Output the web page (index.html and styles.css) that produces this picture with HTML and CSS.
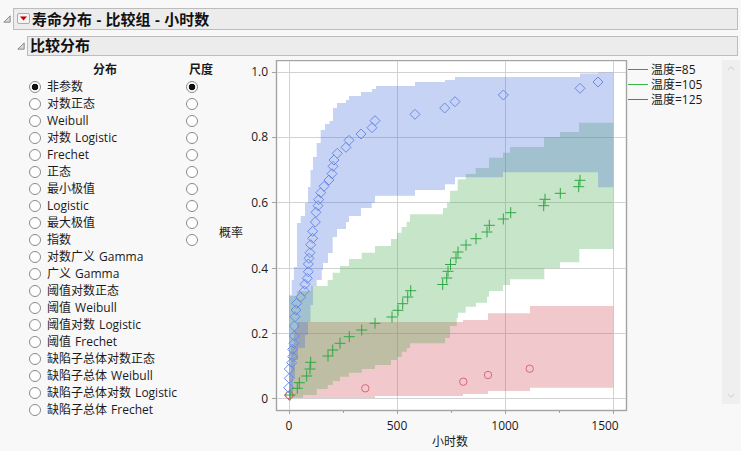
FILE: index.html
```html
<!DOCTYPE html>
<html lang="zh">
<head>
    <meta charset="UTF-8">
    <title>寿命分布 - 比较组 - 小时数</title>
    <link rel="stylesheet" href="styles.css">
</head>
<body>
    <div class="outline-row top-row">
        <svg class="disclosure" viewBox="0 0 10 10"><path d="M9 1V9H1Z"/></svg>
        <div class="outline-bar main-bar">
            <span class="menu-button"><svg viewBox="0 0 11 9"><path d="M2 2.5H9L5.5 6.5Z"/></svg></span>
            <span>寿命分布 - 比较组 - 小时数</span>
        </div>
    </div>
    <div class="outline-row sub-row">
        <svg class="disclosure" viewBox="0 0 10 10"><path d="M9 1V9H1Z"/></svg>
        <div class="outline-bar sub-bar">比较分布</div>
    </div>

    <div class="content">
        <div class="options">
            <div class="dist-col">
                <div class="col-head">分布</div>
                <label class="opt"><i class="radio on"></i>非参数</label>
                <label class="opt"><i class="radio"></i>对数正态</label>
                <label class="opt"><i class="radio"></i>Weibull</label>
                <label class="opt"><i class="radio"></i>对数 Logistic</label>
                <label class="opt"><i class="radio"></i>Frechet</label>
                <label class="opt"><i class="radio"></i>正态</label>
                <label class="opt"><i class="radio"></i>最小极值</label>
                <label class="opt"><i class="radio"></i>Logistic</label>
                <label class="opt"><i class="radio"></i>最大极值</label>
                <label class="opt"><i class="radio"></i>指数</label>
                <label class="opt"><i class="radio"></i>对数广义 Gamma</label>
                <label class="opt"><i class="radio"></i>广义 Gamma</label>
                <label class="opt"><i class="radio"></i>阈值对数正态</label>
                <label class="opt"><i class="radio"></i>阈值 Weibull</label>
                <label class="opt"><i class="radio"></i>阈值对数 Logistic</label>
                <label class="opt"><i class="radio"></i>阈值 Frechet</label>
                <label class="opt"><i class="radio"></i>缺陷子总体对数正态</label>
                <label class="opt"><i class="radio"></i>缺陷子总体 Weibull</label>
                <label class="opt"><i class="radio"></i>缺陷子总体对数 Logistic</label>
                <label class="opt"><i class="radio"></i>缺陷子总体 Frechet</label>
            </div>
            <div class="scale-col">
                <div class="col-head">尺度</div>
                <div class="opt"><i class="radio on"></i></div>
                <div class="opt"><i class="radio"></i></div>
                <div class="opt"><i class="radio"></i></div>
                <div class="opt"><i class="radio"></i></div>
                <div class="opt"><i class="radio"></i></div>
                <div class="opt"><i class="radio"></i></div>
                <div class="opt"><i class="radio"></i></div>
                <div class="opt"><i class="radio"></i></div>
                <div class="opt"><i class="radio"></i></div>
                <div class="opt"><i class="radio"></i></div>
            </div>
        </div>

        <!-- viewBox uses page coordinates so points read straight off the screenshot -->
        <svg class="plot" viewBox="216 60 412 391">
            <defs>
                <path id="dia" d="M0 -5L5 0L0 5L-5 0Z"/>
                <path id="plus" d="M-5.5 0H5.5M0 -5.5V5.5"/>
            </defs>
            <rect class="frame" x="276.5" y="60.5" width="350" height="350"/>
            <g class="grid">
                <path d="M289.5 61V410M397.5 61V410M505.5 61V410M613.5 61V410"/>
                <path d="M277 72.5H626M277 137.5H626M277 202.5H626M277 268.5H626M277 333.5H626M277 398.5H626"/>
            </g>

            <path class="band band-red" d="M289.3 398V372H291V345H294V330H297V322H463V320H488V313.3H530V306H613.3V387.7H530V391H488V394H463V396H375V398Z"/>
            <path class="band band-green" d="M289.3 398V296H297V291H311V286H327.7V280H332.7V272.7H340V266H349V259H361.7V252.7H375V246H391V239H397V232.7H401.7V227H406.7V221.7H410V214.3H443V208H447V202.7H450V190.7H457.7V179.3H465.7V174H475.7V168H489V157.7H503V152.7H510V147H544V137.3H560V132H579V122.7H613.3V249H579.3V262.3H560V268.3H544.3V279.3H510V285H503V291H489V296.7H487V302.7H476V306.7H465.7V312.7H458V318H456.7V326H450V338H445V343.3H410V348H406.7V351.7H401.7V357H397V360H391V365H375V369H361.7V372.7H349V376.7H340V381H332.7V385H327.7V389H316.7V395H303V397.7H293V398Z"/>
            <path class="band band-blue" d="M289.3 398V295H291.7V280H294V267H297V223H300.7V216H305V203H308V187H310.5V170H313V157H316.7V143H320.7V130H325V124H329.5V121H333V108H337V103H346V100H349V96H361V92H372V89H376V86H415V82H445V80H455V77H580V73.5H598V72.5H613.3V187.3H598V172.3H503V177.3H455V184.3H445V190H415V195.7H375V202.7H371.7V208H361V216H349V222H346V229H337V237H332.7V253H328V263H323V270H321.7V280H316.7V286H313V305H310.5V322H308V335H305V348H298V360H295V378H293V395H290V398Z"/>

            <g class="ticks">
                <path d="M289.5 410V414M343.5 410V413M397.5 410V414M451.5 410V413M505.5 410V414M559.5 410V413M613.5 410V414"/>
                <path d="M272 72.5H276M272 137.5H276M272 202.5H276M272 268.5H276M272 333.5H276M272 398.5H276"/>
            </g>
            <g class="axis-text y-nums">
                <text x="268" y="75.5">1.0</text>
                <text x="268" y="141">0.8</text>
                <text x="268" y="206.5">0.6</text>
                <text x="268" y="272.5">0.4</text>
                <text x="268" y="337.5">0.2</text>
                <text x="268" y="402.5">0</text>
            </g>
            <g class="axis-text x-nums">
                <text x="289" y="430">0</text>
                <text x="397" y="430">500</text>
                <text x="505" y="430">1000</text>
                <text x="605" y="430">1500</text>
            </g>
            <text class="axis-text x-nums" x="450" y="446">小时数</text>
            <text class="axis-text x-nums" x="231" y="237">概率</text>

            <g class="pts-blue">
                <use href="#dia" x="598" y="82"/><use href="#dia" x="580" y="88.3"/><use href="#dia" x="503.3" y="95"/>
                <use href="#dia" x="455" y="101.7"/><use href="#dia" x="444.7" y="108"/><use href="#dia" x="415" y="114.3"/>
                <use href="#dia" x="375" y="120.7"/><use href="#dia" x="372" y="127.7"/><use href="#dia" x="361" y="134"/>
                <use href="#dia" x="349" y="140.3"/><use href="#dia" x="346" y="147.3"/><use href="#dia" x="337.3" y="153.3"/>
                <use href="#dia" x="334" y="160"/><use href="#dia" x="333" y="166.3"/><use href="#dia" x="332" y="173.7"/>
                <use href="#dia" x="329" y="180"/><use href="#dia" x="324" y="186.3"/><use href="#dia" x="320.7" y="192.7"/>
                <use href="#dia" x="318.7" y="199.7"/><use href="#dia" x="318" y="205.7"/><use href="#dia" x="316" y="212.3"/>
                <use href="#dia" x="315.3" y="222"/><use href="#dia" x="312.7" y="231.3"/><use href="#dia" x="312.7" y="238.3"/>
                <use href="#dia" x="310.7" y="244.7"/><use href="#dia" x="310" y="252.7"/><use href="#dia" x="309" y="258.3"/>
                <use href="#dia" x="308.3" y="264"/><use href="#dia" x="308.3" y="271.7"/><use href="#dia" x="307.3" y="278.3"/>
                <use href="#dia" x="305" y="284.3"/><use href="#dia" x="304.3" y="291"/><use href="#dia" x="300.7" y="297"/>
                <use href="#dia" x="296.7" y="303.3"/><use href="#dia" x="296" y="310"/><use href="#dia" x="295" y="316.7"/>
                <use href="#dia" x="294.3" y="326"/><use href="#dia" x="294.3" y="336"/><use href="#dia" x="294" y="343.3"/>
                <use href="#dia" x="292.7" y="349.3"/><use href="#dia" x="292.7" y="356.7"/><use href="#dia" x="291.7" y="362.7"/>
                <use href="#dia" x="289.3" y="369"/><use href="#dia" x="289.3" y="378.3"/><use href="#dia" x="288.7" y="387.7"/>
                <use href="#dia" x="289.3" y="395.3"/>
            </g>
            <g class="pts-red">
                <circle cx="289.3" cy="395" r="3.7"/><circle cx="365.3" cy="388.3" r="3.7"/><circle cx="463.3" cy="381.7" r="3.7"/>
                <circle cx="488" cy="375" r="3.7"/><circle cx="529.7" cy="368.7" r="3.7"/>
            </g>
            <g class="pts-green">
                <use href="#plus" x="290" y="395"/><use href="#plus" x="297.3" y="388.3"/><use href="#plus" x="299.3" y="382.7"/>
                <use href="#plus" x="306.7" y="376"/><use href="#plus" x="310" y="369"/><use href="#plus" x="310.7" y="362.3"/>
                <use href="#plus" x="328" y="356"/><use href="#plus" x="332.7" y="350"/><use href="#plus" x="340" y="343.3"/>
                <use href="#plus" x="349.3" y="336.7"/><use href="#plus" x="361.7" y="330"/><use href="#plus" x="375" y="323.3"/>
                <use href="#plus" x="392" y="317"/><use href="#plus" x="398" y="310.3"/><use href="#plus" x="402.7" y="303.7"/>
                <use href="#plus" x="407.7" y="297"/><use href="#plus" x="410.7" y="290.7"/><use href="#plus" x="442.7" y="284.5"/>
                <use href="#plus" x="446.7" y="278"/><use href="#plus" x="448" y="271.3"/><use href="#plus" x="450.5" y="264.5"/>
                <use href="#plus" x="456" y="258"/><use href="#plus" x="458" y="252"/><use href="#plus" x="466" y="245"/>
                <use href="#plus" x="476" y="238.7"/><use href="#plus" x="487" y="232"/><use href="#plus" x="489.3" y="225.3"/>
                <use href="#plus" x="503.3" y="219"/><use href="#plus" x="510.7" y="212.7"/><use href="#plus" x="543.7" y="205.7"/>
                <use href="#plus" x="545" y="199.3"/><use href="#plus" x="560.3" y="193.3"/><use href="#plus" x="578.7" y="186.7"/>
                <use href="#plus" x="580" y="180.3"/>
            </g>
        </svg>

        <div class="legend">
            <div class="legend-row"><i class="swatch swatch-red"></i>温度=85</div>
            <div class="legend-row"><i class="swatch swatch-green"></i>温度=105</div>
            <div class="legend-row"><i class="swatch swatch-blue"></i>温度=125</div>
        </div>

        <div class="scrollbar">
            <svg viewBox="0 0 10 6"><path d="M1 5L5 1L9 5"/></svg>
            <svg viewBox="0 0 10 6"><path d="M1 1L5 5L9 1"/></svg>
        </div>
    </div>
</body>
</html>
```

FILE: styles.css
```css
body {
    margin: 0;
    height: 451px;
    overflow: hidden;
    background-color: #f8f8f8;
    color: #1a1a1a;
    font-family: "Open Sans", "Noto Sans CJK SC", sans-serif;
    font-size: 12px;
}
.outline-row {
    display: flex;
    align-items: center;
    margin-right: 3px;
}
.top-row {
    padding: 8px 0 0 3px;
    gap: 2px;
}
.sub-row {
    padding: 6px 0 0 17px;
    gap: 2px;
}
.disclosure {
    width: 8px;
    height: 8px;
    flex: none;
}
.disclosure path {
    fill: #d8d8d8;
    stroke: #777;
    stroke-width: 1;
}
.outline-bar {
    flex: 1;
    display: flex;
    align-items: center;
    box-sizing: border-box;
    background-color: #ececec;
    border: 1px solid #bcbcbc;
    font-weight: bold;
    font-size: 15px;
    line-height: 18px;
    color: #111;
}
.main-bar {
    height: 22px;
    padding: 0 0 1px 3px;
    gap: 2px;
    word-spacing: 0.5px;
}
.sub-bar {
    height: 20px;
    padding: 0 0 2px 2px;
}
.menu-button {
    display: flex;
    box-sizing: border-box;
    width: 13px;
    height: 11px;
    border: 1px solid #c4a0a0;
    border-radius: 2px;
    background-color: #f4f4f4;
}
.menu-button svg {
    width: 11px;
    height: 9px;
}
.menu-button path {
    fill: #c00000;
}
.content {
    display: flex;
    margin-top: 4px;
    height: 391px;
}
.options {
    display: flex;
    width: 216px;
    flex: none;
    padding-left: 29px;
    box-sizing: border-box;
}
.dist-col {
    width: 157px;
}
.scale-col {
    width: 30px;
}
.col-head {
    height: 18px;
    line-height: 20px;
    font-weight: bold;
    font-size: 12px;
}
.dist-col .col-head {
    width: 152px;
    text-align: center;
}
.scale-col .col-head {
    padding-left: 3px;
}
.opt {
    display: flex;
    align-items: center;
    gap: 6px;
    height: 17px;
    line-height: 17px;
    white-space: nowrap;
    word-spacing: 1px;
}
.radio {
    display: block;
    box-sizing: border-box;
    width: 12px;
    height: 12px;
    flex: none;
    border: 1px solid #8a8a8a;
    border-radius: 50%;
    background-color: #fff;
}
.radio.on {
    background: radial-gradient(circle, #111 0, #111 3px, #fff 3.6px);
}
.plot {
    width: 412px;
    height: 391px;
    flex: none;
}
.frame {
    fill: #fff;
    stroke: #a3a3a3;
    stroke-width: 1.4;
}
.grid path {
    fill: none;
    stroke: #d2d2d2;
    stroke-width: 1;
}
.band {
    fill-opacity: 0.3;
}
.band-red {
    fill: #d04855;
}
.band-green {
    fill: #44a848;
}
.band-blue {
    fill: #446cda;
}
.ticks path {
    fill: none;
    stroke: #a3a3a3;
    stroke-width: 1;
}
.axis-text {
    font-size: 12px;
    fill: #1a1a1a;
}
.y-nums {
    text-anchor: end;
}
.x-nums {
    text-anchor: middle;
}
.pts-blue use {
    fill: none;
    stroke: #6a8ae8;
    stroke-width: 1;
}
.pts-red circle {
    fill: none;
    stroke: #dc6675;
    stroke-width: 1;
}
.pts-green use {
    fill: none;
    stroke: #2fa843;
    stroke-width: 1;
}
.legend {
    width: 94px;
    flex: none;
    padding-top: 2px;
    box-sizing: border-box;
}
.legend-row {
    display: flex;
    align-items: center;
    gap: 3px;
    height: 15px;
    line-height: 15px;
    white-space: nowrap;
}
.swatch {
    display: block;
    width: 20px;
    height: 1px;
}
.swatch-red {
    background-color: #c9505f;
}
.swatch-green {
    background-color: #3ab54a;
}
.swatch-blue {
    background-color: #4a6fc8;
}
.scrollbar {
    display: flex;
    flex-direction: column;
    justify-content: space-between;
    align-items: center;
    box-sizing: border-box;
    width: 18px;
    height: 344px;
    padding: 6px 0;
    background-color: #efefef;
}
.scrollbar svg {
    width: 8px;
    height: 5px;
}
.scrollbar path {
    fill: none;
    stroke: #d8d8d8;
    stroke-width: 1.5;
}
```
